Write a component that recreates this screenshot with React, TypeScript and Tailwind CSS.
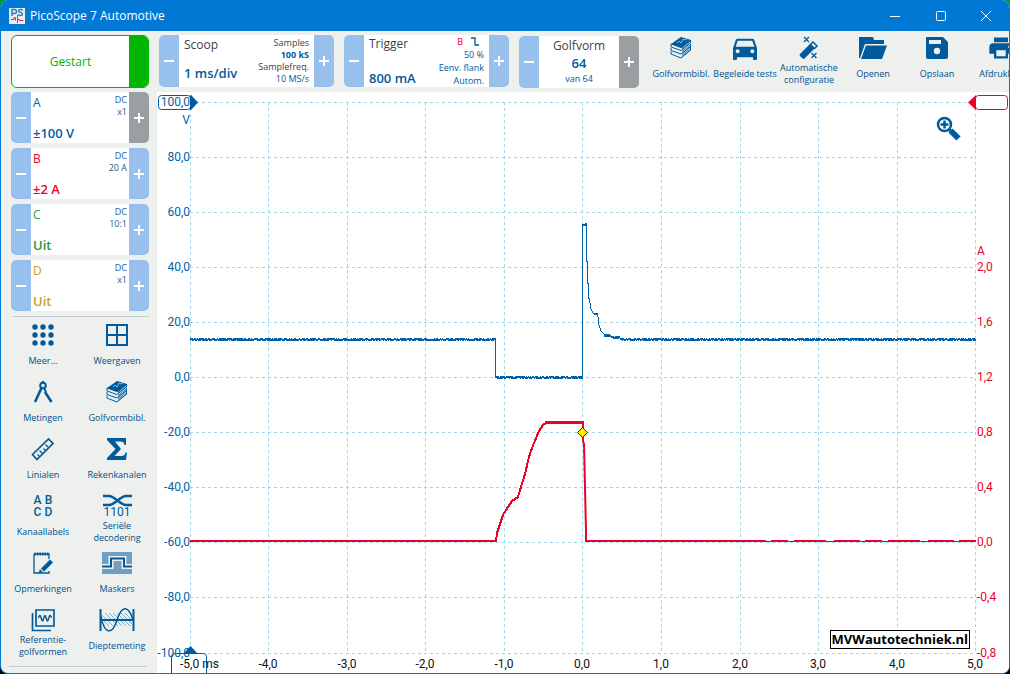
import type { ReactNode } from "react";
import { MdDirectionsCar, MdPrint } from "react-icons/md";

const INK = "#005a9c";

function Svg({ w, h, children }: { w: number; h: number; children: ReactNode }) {
  return (
    <svg width={w} height={h} viewBox={`0 0 ${w} ${h}`} fill="none" stroke={INK} strokeWidth="2" aria-hidden="true">
      {children}
    </svg>
  );
}

const StackIcon = () => (
  <Svg w={22} h={24}>
    <path d="M1 8 11 1l10 3-9 8z" fill={INK} stroke="none" />
    <path d="M7 7l2-2 2 2 2-4 2 1 2-1" stroke="#b9cfdd" strokeWidth="0.8" />
    <path d="M1 8v3l10 3.500L20.500 7V4M1 12v2.500l10 3.500 9.500-7.500V8M1 15.500V18l10 4 9.500-8v-3M1 8l10 3.500" strokeWidth="1" />
    <path d="M12 11.500l9-7M12 15.500l9-7M12 19l9-7M12 13l9-7M12 17l9-7M12 20.500l9-7" strokeWidth="0.800" />
  </Svg>
);

const WandIcon = () => (
  <Svg w={24} h={24}>
    <path d="M3 18 13.500 7.500l4.500 4.500L7.500 22.500a1.500 1.500 0 0 1-2 0L3 20a1.500 1.500 0 0 1 0-2z" fill={INK} stroke="none" />
    <path d="M13.500 8.500 16 6l4 4-2.500 2.500z" fill="#eef0ee" strokeWidth="1.500" />
    <path d="M7 1l5 5M12 1 7 6M14.500 17l5 5M19.500 17l-5 5" strokeWidth="1.300" />
  </Svg>
);

const FolderIcon = () => (
  <Svg w={28} h={24}>
    <path d="M0 22V1h14l1 3h10v4H6L1 22z" fill={INK} stroke="none" />
    <path d="M7 9.500h21L23 23H2z" fill={INK} stroke="none" />
  </Svg>
);

const SaveIcon = () => (
  <Svg w={24} h={24}>
    <path d="M2 1h16l5 5v15a2 2 0 0 1-2 2H3a2 2 0 0 1-2-2V2a1 1 0 0 1 1-1z" fill={INK} stroke="none" />
    <path d="M4 4h12v4H4z" fill="#eef0ee" stroke="none" />
    <circle cx="12" cy="15" r="3.200" fill="#eef0ee" stroke="none" />
  </Svg>
);

const DotsIcon = () => (
  <Svg w={24} h={24}>
    {[4, 12, 20].map((y) => [4, 12, 20].map((x) => <circle key={`${x}-${y}`} cx={x} cy={y} r="2.7" fill={INK} stroke="none" />))}
  </Svg>
);

const ViewsIcon = () => (
  <Svg w={24} h={24}>
    <path d="M2 2h20v20H2zM12 2v20M2 12h20" />
  </Svg>
);

const CompassIcon = () => (
  <Svg w={22} h={24}>
    <path d="M11 1v2" />
    <circle cx="11" cy="5.500" r="2.800" />
    <path d="M9.500 8 3 22M13 12l6.500 10" strokeWidth="2.600" />
    <path d="M12 8l2 4" />
  </Svg>
);

const RulerIcon = () => (
  <Svg w={24} h={24}>
    <path d="M1.500 17.500 17.500 2l4.500 4.500L6 22.500z" strokeWidth="1.700" />
    <path d="M8.500 19.500l-2-2M11.500 16.500l-3-3M14.500 13.500l-2-2M17.500 10.500l-3-3" strokeWidth="1.200" />
  </Svg>
);

const SigmaIcon = () => (
  <Svg w={22} h={24}>
    <path d="M1 1h19v7h-1.500c-.5-2.500-1.500-3.500-4-3.500H9l6 7.500-6.500 7H15c3 0 4-1 4.500-3.500H21L20 23H1v-2l8.500-9L1 3z" fill={INK} stroke="none" />
  </Svg>
);

const LettersIcon = () => (
  <span className="grid grid-cols-2 gap-x-[3px] text-center font-[Roboto,sans-serif] text-[12px] leading-[12px] font-medium" aria-hidden="true">
    <span>A</span><span>B</span><span>C</span><span>D</span>
  </span>
);

const SerialIcon = () => (
  <span className="flex flex-col items-center" aria-hidden="true">
    <Svg w={29} h={13}>
      <path d="M0 2h6c6 0 11 9 17 9h6M0 11h6c6 0 11-9 17-9h6" strokeWidth="2.400" />
    </Svg>
    <span className="font-[Roboto,sans-serif] text-[12px] leading-[11px]">1101</span>
  </span>
);

const NotesIcon = () => (
  <Svg w={22} h={24}>
    <path d="M2 3h15v5M17 20v2H2V3" strokeWidth="1.300" />
    <path d="M2.500 3h15" strokeWidth="3" strokeDasharray="1.500 1" />
    <path d="M9 17.500 18 8.500l3 3-9 9z" fill={INK} stroke="none" />
    <path d="M8 18.500 7 22l3.500-1z" fill={INK} strokeWidth="0.500" />
  </Svg>
);

const MaskIcon = () => (
  <Svg w={30} h={24}>
    <path d="M0 1h30v22H0z" fill="#719fc1" stroke="none" />
    <path d="M0 15.500h9v-8h13v8h8" stroke="#eef0ee" strokeWidth="5" />
    <path d="M0 15.500h9v-8h13v8h8" strokeWidth="2" />
  </Svg>
);

const ReferenceIcon = () => (
  <Svg w={24} h={24}>
    <path d="M5 2h18v16H5zM1.500 5v17.500H20" strokeWidth="1.700" />
    <path d="M7 9.500c1.500 0 1-2 2-2s1.500 5.500 2.500 5.500 1.500-5.500 2.500-5.500 1.500 5.500 2.500 5.500 1.500-5.500 2.500-5.500 1 2 2 2" strokeWidth="1.500" />
  </Svg>
);

const DepthIcon = () => (
  <Svg w={36} h={24}>
    <path d="M2 6l12 12M6 5l13 13M10 5l13 13M14 5l13 13M18 5l13 13M22 5l11 11M26 5l7 7M2 10l8 8M2 14l4 4" stroke="#86adc9" strokeWidth="1" />
    <path d="M1.500 1v22M34.500 1v22M1 12h34" />
    <path d="M2 8c3 18 11 20 16 4s12-14 16 0" strokeWidth="1.500" />
  </Svg>
);

type Tool = { label: string; icon: ReactNode };

const toolbar: Tool[] = [
  { label: "Golfvormbibl.", icon: <StackIcon /> },
  { label: "Begeleide tests", icon: <MdDirectionsCar size={32} /> },
  { label: "Automatische configuratie", icon: <WandIcon /> },
  { label: "Openen", icon: <FolderIcon /> },
  { label: "Opslaan", icon: <SaveIcon /> },
  { label: "Afdrukken", icon: <MdPrint size={28} /> },
];

const sideTools: Tool[] = [
  { label: "Meer...", icon: <DotsIcon /> },
  { label: "Weergaven", icon: <ViewsIcon /> },
  { label: "Metingen", icon: <CompassIcon /> },
  { label: "Golfvormbibl.", icon: <StackIcon /> },
  { label: "Linialen", icon: <RulerIcon /> },
  { label: "Rekenkanalen", icon: <SigmaIcon /> },
  { label: "Kanaallabels", icon: <LettersIcon /> },
  { label: "Seriële decodering", icon: <SerialIcon /> },
  { label: "Opmerkingen", icon: <NotesIcon /> },
  { label: "Maskers", icon: <MaskIcon /> },
  { label: "Referentie-golfvormen", icon: <ReferenceIcon /> },
  { label: "Dieptemeting", icon: <DepthIcon /> },
];

function ToolButton({ label, icon }: Tool) {
  return (
    <button className="flex w-full flex-col items-center text-[#005a9c]">
      <span className="flex h-6 items-center justify-center">{icon}</span>
      <span className="flex h-7 items-center justify-center text-[9px] leading-[12px] text-[#004f8c]">{label}</span>
    </button>
  );
}

function Step({ sign, label, gray }: { sign: "plus" | "minus"; label: string; gray?: boolean }) {
  return (
    <button aria-label={label} className={`flex w-5 shrink-0 items-center justify-center ${gray ? "bg-[#9aa0a2]" : "bg-[#97c0ed]"}`}>
      <svg width="12" height="12" viewBox="0 0 12 12" stroke="#fff" strokeWidth="2" aria-hidden="true">
        <path d={sign === "plus" ? "M1 6h10M6 1v10" : "M1 6h10"} />
      </svg>
    </button>
  );
}

function Stepper({ name, grayPlus, className, children }: { name: string; grayPlus?: boolean; className: string; children: ReactNode }) {
  return (
    <div className={`flex shrink-0 overflow-hidden rounded-[5px] bg-white ${className}`}>
      <Step sign="minus" label={`${name} lager`} />
      <div className="flex min-w-0 flex-1 justify-between whitespace-nowrap">{children}</div>
      <Step sign="plus" label={`${name} hoger`} gray={grayPlus} />
    </div>
  );
}

const channels = [
  { name: "A", range: "±100 V", probe: "x1", color: "text-[#0061a8]", gray: true },
  { name: "B", range: "±2 A", probe: "20 A", color: "text-[#ee0028]", gray: false },
  { name: "C", range: "Uit", probe: "10:1", color: "text-[#259b38]", gray: false },
  { name: "D", range: "Uit", probe: "x1", color: "text-[#cc9f28]", gray: false },
];

const gridX = [190, 268, 347, 425, 504, 582, 661, 740, 818, 897, 975];
const gridY = [102, 157, 212, 267, 322, 377, 432, 487, 542, 597, 653];
const voltLabels = ["100,0", "80,0", "60,0", "40,0", "20,0", "0,0", "-20,0", "-40,0", "-60,0", "-80,0", "-100,0"];
const ampLabels = ["", "", "", "2,0", "1,6", "1,2", "0,8", "0,4", "0,0", "-0,4", "-0,8"];
const timeLabels = ["-5,0 ms", "-4,0", "-3,0", "-2,0", "-1,0", "0,0", "1,0", "2,0", "3,0", "4,0", "5,0"];

// Horizontal trace at height y with one-pixel measurement noise on both sides.
function noisy(from: number, to: number, y: number) {
  let d = "";
  for (let x = from; x < to; x += 1) {
    const r = Math.abs(Math.sin(x * 12.9898) * 43758.5453) % 1;
    const up = r > 0.35 ? 1.5 : 0.5;
    const down = r < 0.75 ? 1.5 : 0.5;
    d += `M${x + 0.5} ${y - up}V${y + down}`;
  }
  return d;
}

const voltPath =
  noisy(190, 496, 339.5) + "M495.500 339V378" + noisy(496, 582, 377.5) +
  "M582.500 379V224.500H586.500V261H587.500V283H588.500V298H589.500L590.500 308L593 313H597.500L599 325L601 331L604 334L611 336.500" +
  noisy(583, 587, 224.5) + noisy(594, 598, 314.5) + noisy(604, 611, 335.5) + noisy(611, 620, 337.5) + noisy(620, 976, 339.5);

const ampPath =
  "M190 541H496L497 533L500 524L503 515L508 507L512 501L518 497L521 487L525 474L528 461L530.500 452L534 443L539 431L543 425L546 423";

function Chart() {
  return (
    <svg className="block h-auto w-full font-[Roboto,sans-serif] text-[12px]" viewBox="157 92 852 581" role="img" aria-label="Golfvorm van kanaal A en B">
      <g stroke="#a3d5e2" strokeDasharray="3 3" shapeRendering="crispEdges">
        {gridX.map((x) => <path key={x} d={`M${x + 0.5} 102V653`} />)}
        {gridY.map((y) => <path key={y} d={`M190 ${y + 0.5}H975`} />)}
      </g>
      <path d={voltPath} fill="none" stroke="#0061a8" shapeRendering="crispEdges" />
      <g fill="none" stroke="#ee0028">
        <path d={ampPath} strokeWidth="2" shapeRendering="crispEdges" />
        <path d="M545 422.500H584" strokeWidth="3" shapeRendering="crispEdges" />
        <path d="M583 422V441L584 444L585 488L586 531V541" strokeWidth="2" />
        <path d="M585 541H740" strokeWidth="2" shapeRendering="crispEdges" />
        <path d="M740 541H976" strokeWidth="2" strokeDasharray="26 5 17 6 32 8" shapeRendering="crispEdges" />
        <path d="M740 541.500H976" shapeRendering="crispEdges" />
      </g>
      <path d="M582.500 427.500l5 5-5 5-5-5z" fill="#ffee00" stroke="#2a1a8a" />
      <g fill="#0061a8" textAnchor="end">
        {gridY.map((y, i) => <text key={y} x="190" y={y + 4}>{voltLabels[i]}</text>)}
        <text x="190" y="124">V</text>
      </g>
      <g fill="#ee0028">
        {gridY.map((y, i) => <text key={y} x="977" y={y + 4}>{ampLabels[i]}</text>)}
        <text x="977" y="255">A</text>
      </g>
      <g fill="#111">
        {gridX.map((x, i) => <text key={x} x={i === 0 ? 180 : x} y="668" textAnchor={i === 0 ? "start" : "middle"}>{timeLabels[i]}</text>)}
      </g>
      <rect x="158.500" y="95.500" width="32" height="14" rx="3" fill="none" stroke="#005a9c" />
      <path d="M190 95h1l7 7.500-7 7.500h-1z" fill="#005a9c" />
      <path d="M171.500 673V656.500a3 3 0 0 1 3-3H203.500a3 3 0 0 1 3 3V673" fill="none" stroke="#005a9c" />
      <path d="M183 654l7.500-8 7.500 8z" fill="#005a9c" />
      <rect x="975.500" y="95.500" width="32" height="14" rx="3" fill="none" stroke="#ee0028" />
      <path d="M976 95l-8 7.500 8 7.500z" fill="#ee0028" />
    </svg>
  );
}

export default function App() {
  return (
    <div className="min-h-screen bg-linear-to-b from-[#009a2e] from-50% to-black to-50%">
      <div className="flex min-h-screen flex-col overflow-hidden rounded-lg border-x border-b border-[#0078d4] bg-[#eef0ee] font-['Open_Sans','Noto_Sans',sans-serif]">
        <header className="flex h-[31px] shrink-0 items-center bg-[#0078d4] pl-2 text-white">
          <svg width="16" height="16" viewBox="0 0 16 16" aria-hidden="true">
            <path d="M0 0h16v16H0z" fill="#e9edf0" />
            <path d="M3 8V1.500h2.500a2 2 0 0 1 0 4H3M13.500 2.500c-1-1.500-4-1.500-4 .5s4 1 4 3-3 2-4.500.5" fill="none" stroke="#2f80bd" strokeWidth="1.500" />
            <path d="M2 11.500h3V9.500h1.500v3M8.500 7v8M8.500 11.500h2v1h4" fill="none" stroke="#e0284a" />
          </svg>
          <h1 className="ml-[5px] flex-1 text-[12px]">PicoScope 7 Automotive</h1>
          <button aria-label="Minimaliseren" className="flex h-full w-[46px] items-center justify-center">
            <svg width="10" height="10" stroke="#fff" aria-hidden="true"><path d="M0 5.500h10" /></svg>
          </button>
          <button aria-label="Maximaliseren" className="flex h-full w-[45px] items-center justify-center">
            <svg width="10" height="10" stroke="#fff" fill="none" aria-hidden="true"><rect x="0.500" y="0.500" width="9" height="9" rx="1" /></svg>
          </button>
          <button aria-label="Sluiten" className="flex h-full w-[46px] items-center justify-center">
            <svg width="10" height="10" stroke="#fff" aria-hidden="true"><path d="M0 0l10 10M10 0 0 10" /></svg>
          </button>
        </header>

        <div className="flex h-[61px] shrink-0 items-start gap-[10px] overflow-hidden pt-1 pl-[10px]">
          <button className="flex h-[53px] w-[138px] shrink-0 overflow-hidden rounded-md border border-[#00b400] bg-white text-[12px] text-[#00b400]">
            <span className="flex flex-1 items-center justify-center self-center">Gestart</span>
            <span className="h-full w-[19px] bg-[#00b400]" />
          </button>
          <Stepper name="Tijdbasis" className="h-[52px] w-[175px] text-[#005a9c]">
            <div className="flex flex-col justify-between pt-[2px] pb-1 pl-[5px]">
              <span className="text-[12px] leading-4 text-[#3f3f3f]">Scoop</span>
              <span className="text-[13px] leading-5 font-semibold">1 ms/div</span>
            </div>
            <div className="flex flex-col pt-[2px] pr-[5px] text-right text-[9px] leading-[12px]">
              <span className="text-[#3f3f3f]">Samples</span>
              <span className="font-bold">100 kS</span>
              <span className="text-[#3f3f3f]">Samplefreq.</span>
              <span>10 MS/s</span>
            </div>
          </Stepper>
          <Stepper name="Trigger" className="h-[52px] w-[165px] text-[#005a9c]">
            <div className="flex flex-col justify-between pt-[1px] pl-[5px]">
              <span className="text-[12px] leading-4 text-[#3f3f3f]">Trigger</span>
              <span className="text-[13px] leading-[18px] font-semibold">800 mA</span>
            </div>
            <div className="flex flex-col pr-[5px] text-right text-[9px] leading-[13px]">
              <span className="flex items-center justify-end gap-2 pr-[5px] text-[#ee0028]">
                B
                <svg width="8" height="9" fill="none" stroke="#005a9c" aria-label="Dalende flank"><path d="M0 1h4v7h4" strokeWidth="1.300" /></svg>
              </span>
              <span>50 %</span>
              <span>Eenv. flank</span>
              <span>Autom.</span>
            </div>
          </Stepper>
          <Stepper name="Golfvorm" grayPlus className="mt-px h-[52px] w-[120px] text-[#005a9c]">
            <div className="flex flex-1 flex-col items-center pt-[2px]">
              <span className="text-[12px] leading-4 text-[#3f3f3f]">Golfvorm</span>
              <span className="text-[13px] leading-[18px] font-semibold">64</span>
              <span className="text-[9px] leading-[14px]">van 64</span>
            </div>
          </Stepper>
          <nav className="flex min-w-0 flex-1" aria-label="Werkbalk">
            {toolbar.map((t) => (
              <div key={t.label} className="w-16 shrink-0 pt-px"><ToolButton {...t} /></div>
            ))}
          </nav>
        </div>

        <main className="flex flex-1">
          <aside className="w-[156px] shrink-0">
            <div className="flex flex-col gap-[5px] pr-2 pl-[10px]">
              {channels.map((c) => (
                <Stepper key={c.name} name={`Kanaal ${c.name}`} grayPlus={c.gray} className="h-[51px]">
                  <div className={`flex flex-col justify-between pt-[3px] pb-px pl-[2px] ${c.color}`}>
                    <span className="text-[12px] leading-4">{c.name}</span>
                    <span className="text-[13px] leading-[18px] font-semibold">{c.range}</span>
                  </div>
                  <div className="flex flex-col pt-[2px] pr-[2px] text-right text-[9px] leading-[12px] text-[#1c5c94]">
                    <span>DC</span>
                    <span>{c.probe}</span>
                  </div>
                </Stepper>
              ))}
            </div>
            <hr className="mt-[5px] mr-2 ml-3 border-[#c4c9cc]" />
            <nav className="grid grid-cols-2 gap-y-[5px] pt-[6px] pr-[3px] pl-[5px]" aria-label="Gereedschappen">
              {sideTools.map((t) => <ToolButton key={t.label} {...t} />)}
            </nav>
            <hr className="mt-[6px] mr-[10px] ml-2 border-[#c4c9cc]" />
          </aside>
          <section className="relative min-w-0 flex-1 bg-white">
            <Chart />
            <button aria-label="Inzoomen" className="absolute top-[24px] right-[48px]">
              <svg width="25" height="25" viewBox="0 0 25 25" fill="none" aria-hidden="true">
                <circle cx="8.500" cy="8.500" r="6.500" stroke="#005a9c" strokeWidth="2.500" />
                <path d="M8.500 4.500v8M4.500 8.500h8" stroke="#005a9c" strokeWidth="2.500" />
                <path d="M13 13l3 3" stroke="#005a9c" strokeWidth="3" />
                <path d="M14.500 14.500l8 8" stroke="#005a9c" strokeWidth="6" />
              </svg>
            </button>
            <p className="absolute right-[39px] bottom-[24px] border border-black bg-white px-px text-[13px] leading-[17px] font-bold text-black">MVWautotechniek.nl</p>
          </section>
        </main>
      </div>
    </div>
  );
}
